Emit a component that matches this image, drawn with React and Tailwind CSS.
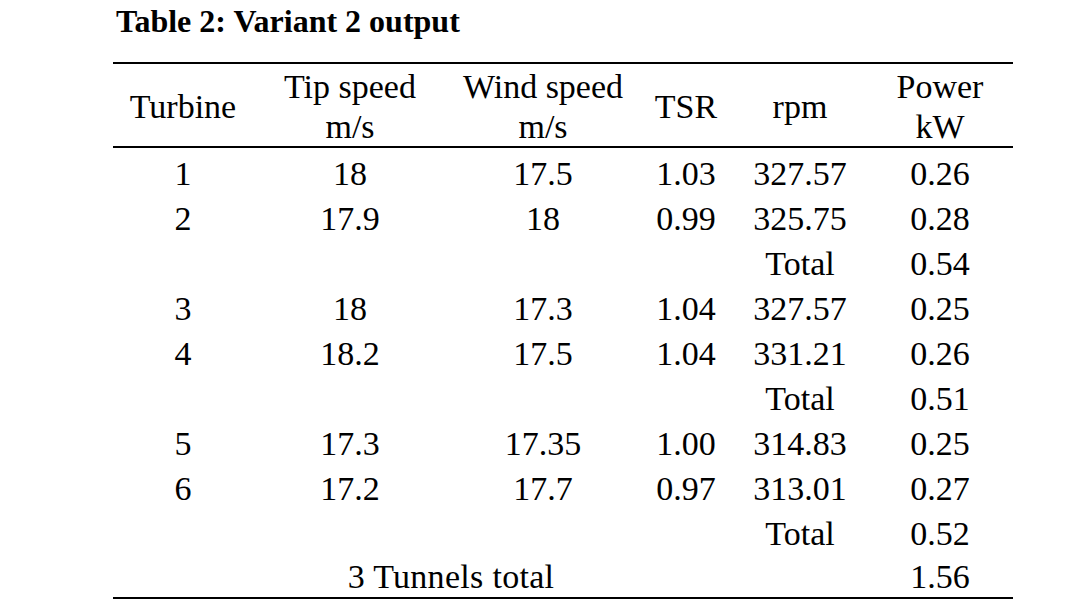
import React from "react";

const rows = [
  ["1", "18", "17.5", "1.03", "327.57", "0.26"],
  ["2", "17.9", "18", "0.99", "325.75", "0.28"],
  ["", "", "", "", "Total", "0.54"],
  ["3", "18", "17.3", "1.04", "327.57", "0.25"],
  ["4", "18.2", "17.5", "1.04", "331.21", "0.26"],
  ["", "", "", "", "Total", "0.51"],
  ["5", "17.3", "17.35", "1.00", "314.83", "0.25"],
  ["6", "17.2", "17.7", "0.97", "313.01", "0.27"],
  ["", "", "", "", "Total", "0.52"],
];

const cols = "grid grid-cols-[140px_194px_192px_94px_134px_146px]";

const App = () => {
  return (
    <div className="w-[1080px] h-[601px] bg-white text-black overflow-hidden font-['Liberation_Serif',serif]">
      <div className="pl-[116px] pt-[3px] h-[62px]">
        <h1 className="text-[32px] font-bold leading-[37px]">Table 2: Variant 2 output</h1>
      </div>
      <div className="ml-[113px] w-[900px] border-t-2 border-b-2 border-black text-[34px]">
        <div className={`${cols} h-[84px] pt-[3px] items-center text-center leading-[40px] border-b-2 border-black`}>
          <div>Turbine</div>
          <div>Tip speed<br />m/s</div>
          <div>Wind speed<br />m/s</div>
          <div>TSR</div>
          <div>rpm</div>
          <div>Power<br />kW</div>
        </div>
        <div className="pt-[3px]">
          {rows.map((r, i) => (
            <div key={i} className={`${cols} h-[45px] items-center text-center leading-[45px]`}>
              {r.map((c, j) => (
                <div key={j}>{c}</div>
              ))}
            </div>
          ))}
          <div className={`${cols} h-[41px] items-center text-center leading-[41px]`}>
            <div className="col-span-3 pl-[150px] tracking-[0.3px]">3 Tunnels total</div>
            <div></div>
            <div></div>
            <div>1.56</div>
          </div>
        </div>
      </div>
    </div>
  );
};

export default App;
